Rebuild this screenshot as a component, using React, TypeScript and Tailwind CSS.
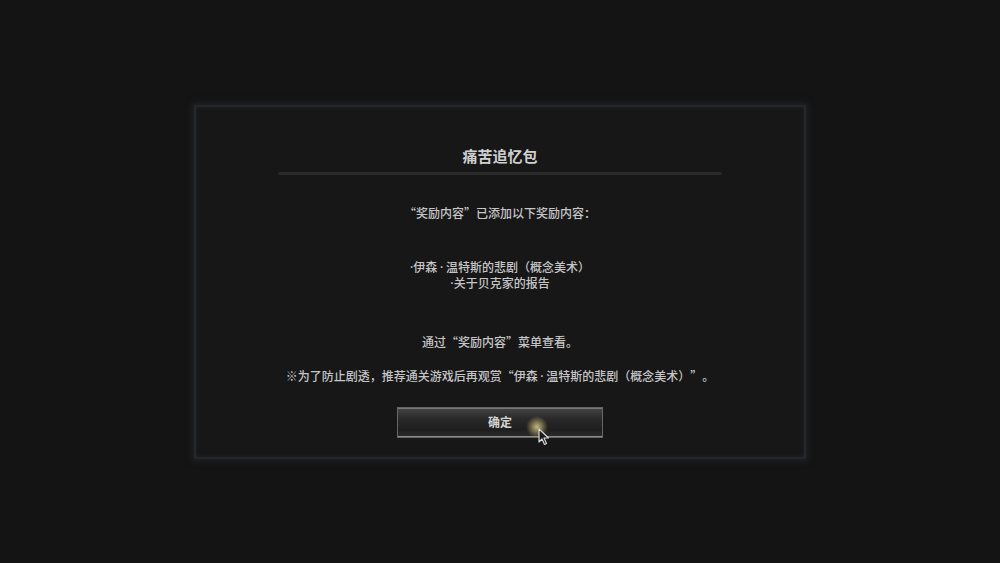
import React from "react";

// half-width middle dot, the CJK face draws it full width
const Dot = () => <span className="font-['Noto_Sans'] leading-[16px]">·</span>;

const Pointer = () => (
  <div className="absolute left-[140px] top-[20px] pointer-events-none">
    <div className="absolute -left-[12px] -top-[12px] w-[22px] h-[22px] rounded-full bg-[radial-gradient(circle,rgba(235,220,150,0.8)_0%,rgba(200,180,110,0.35)_45%,rgba(0,0,0,0)_70%)]" />
    <svg width="12" height="18" viewBox="0 0 12 18" className="absolute left-[0px] top-[0px]">
      <path
        d="M1 1 L1 14 L4 11 L6.5 16.5 L8.5 15.5 L6 10 L10.5 10 Z"
        fill="#1a1a1a"
        stroke="#d8d8d8"
        strokeWidth="1.2"
        strokeLinejoin="round"
      />
    </svg>
  </div>
);

const Line = ({ children, className = "" }: { children: React.ReactNode; className?: string }) => (
  <p className={`h-[16px] text-[12px] leading-[16px] whitespace-nowrap ${className}`}>{children}</p>
);

const App = () => {
  return (
    <div
      className="w-[1000px] h-[563px] bg-[#141414] flex items-center justify-center [text-spacing-trim:space-all]"
      style={{ fontFamily: '"Noto Sans CJK SC", "Noto Sans", sans-serif' }}
    >
      <div className="w-[612px] h-[354px] border-2 border-[#25282a] bg-[#171718] shadow-[0_0_6px_2px_rgba(40,44,46,0.6),inset_0_0_4px_rgba(40,44,46,0.6)] flex flex-col items-center pt-[39px] text-[#c6c6c6] font-medium">
        <p className="h-[20px] text-[15px] leading-[20px] font-bold text-[#d0d0d0]">痛苦追忆包</p>
        <div className="mt-[6px] w-[444px] h-[3px] rounded-full bg-[#2a2a2b]" />

        <Line className="mt-[30px]">“奖励内容”已添加以下奖励内容：</Line>

        <div className="mt-[38px] flex flex-col items-center">
          <Line>
            <Dot />伊森 <Dot /> 温特斯的悲剧（概念美术）
          </Line>
          <Line>
            <Dot />关于贝克家的报告
          </Line>
        </div>

        <Line className="mt-[43px]">通过“奖励内容”菜单查看。</Line>
        <Line className="mt-[18px]">
          ※为了防止剧透，推荐通关游戏后再观赏“伊森 <Dot /> 温特斯的悲剧（概念美术）”。
        </Line>

        <div className="relative mt-[23px] w-[206px] h-[31px] border border-[#666] bg-[linear-gradient(to_bottom,#454545_0%,#2a2a2a_35%,#1e1e1e_75%,#2c2c2c_100%)] shadow-[inset_0_-1px_0_#8a8a8a,inset_0_1px_0_#777] flex items-center justify-center">
          <span className="text-[12px] font-bold text-[#d4d4d4]">确定</span>
          <Pointer />
        </div>
      </div>
    </div>
  );
};

export default App;
